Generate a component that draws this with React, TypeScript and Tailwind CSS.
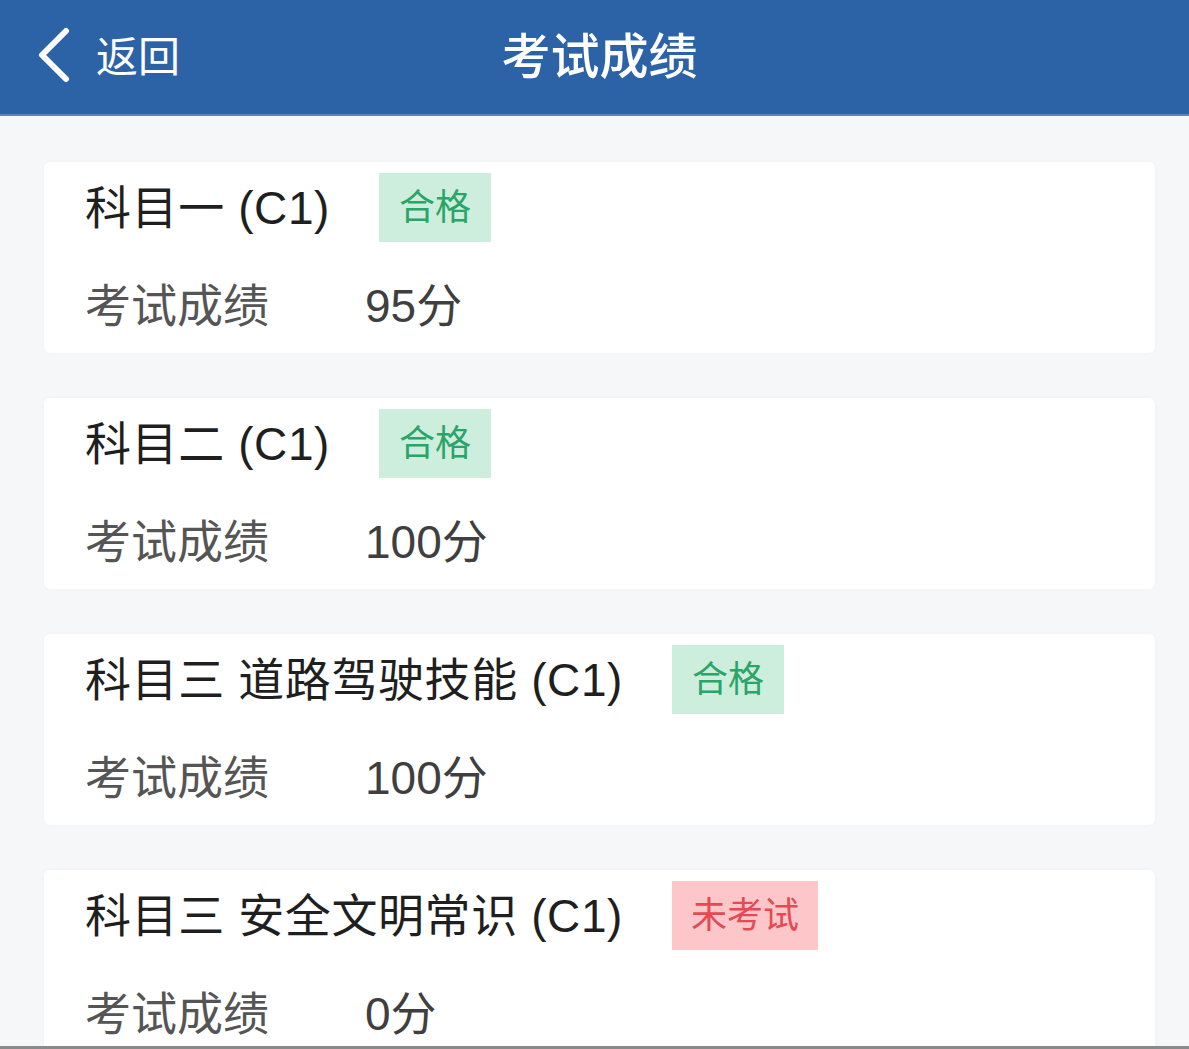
import React from "react";

type Item = { title: string; status: "pass" | "none"; score: string };

const items: Item[] = [
  { title: "科目一 (C1)", status: "pass", score: "95分" },
  { title: "科目二 (C1)", status: "pass", score: "100分" },
  { title: "科目三 道路驾驶技能 (C1)", status: "pass", score: "100分" },
  { title: "科目三 安全文明常识 (C1)", status: "none", score: "0分" },
];

const font = { fontFamily: '"Liberation Sans", "Noto Sans CJK SC", sans-serif' };

function Card({ item }: { item: Item }) {
  return (
    <div className="bg-white rounded-[6px] h-[191px] shrink-0 pl-[41px] pt-[11px] flex flex-col shadow-[0_0_4px_rgba(0,0,0,0.03)]">
      <div className="h-[69px] flex items-center">
        <span className="text-[46px] leading-none text-[#1f1f1f] tracking-[0.6px]">{item.title}</span>
        {item.status === "pass" ? (
          <span className="ml-[49px] h-[69px] w-[112px] flex items-center justify-center bg-[#cdeedd] text-[#2aa468] text-[36px] leading-none">
            合格
          </span>
        ) : (
          <span className="ml-[49px] h-[69px] w-[146px] flex items-center justify-center bg-[#fdc6c8] text-[#e24b55] text-[36px] leading-none">
            未考试
          </span>
        )}
      </div>
      <div className="mt-[34px] h-[60px] flex items-center">
        <span className="w-[280px] text-[46px] leading-none text-[#555555]">考试成绩</span>
        <span className="text-[46px] leading-none text-[#3f3f3f]">{item.score}</span>
      </div>
    </div>
  );
}

export default function App() {
  return (
    <div className="w-[1189px] h-[1049px] flex flex-col bg-[#f5f7f9] overflow-hidden" style={font}>
      <div className="h-[116px] shrink-0 bg-[#2c63a7] border-b-[2px] border-[#5a86bd] relative flex items-center">
        <div className="flex items-center pl-[36px] pb-[4px]">
          <svg width="36" height="56" viewBox="0 0 36 56" fill="none">
            <path d="M30 4 L6 28 L30 52" stroke="white" strokeWidth="6" strokeLinecap="round" strokeLinejoin="round" />
          </svg>
          <span className="ml-[24px] pt-[6px] text-[42px] leading-none text-white">返回</span>
        </div>
        <div className="absolute inset-0 flex items-center justify-center pl-[10px] pb-[0px]">
          <span className="text-[49px] leading-none text-white font-medium">考试成绩</span>
        </div>
      </div>
      <div className="flex-1 overflow-hidden flex flex-col gap-[45px] pt-[46px] pl-[44px] pr-[34px]">
        {items.map((it, i) => (
          <Card key={i} item={it} />
        ))}
      </div>
      <div className="h-[3px] shrink-0 bg-[#8a8a8a]" />
    </div>
  );
}
